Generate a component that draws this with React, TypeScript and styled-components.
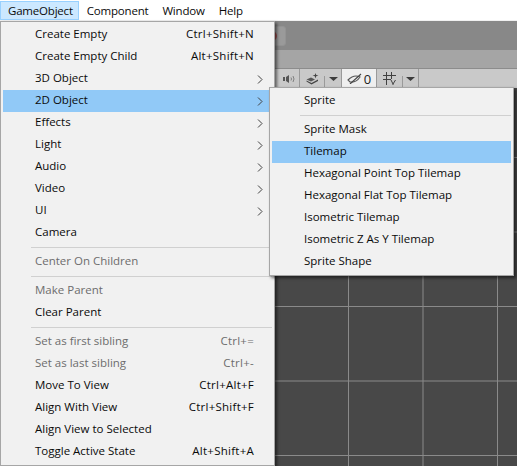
import React from 'react';
import styled, { createGlobalStyle } from 'styled-components';

const GlobalStyle = createGlobalStyle`
  html, body {
    margin: 0;
    padding: 0;
    width: 517px;
    height: 466px;
    overflow: hidden;
    background: #484848;
  }
  * { box-sizing: border-box; }
`;

const Page = styled.div`
  position: relative;
  width: 517px;
  height: 466px;
  display: flex;
  flex-direction: column;
  overflow: hidden;
  font-family: "Open Sans", "Noto Sans", sans-serif;
  font-size: 11.5px;
  color: #0a0a0a;
`;

const MenuBar = styled.div`
  height: 21px;
  flex: none;
  display: flex;
  background: #fff;
  border-bottom: 1px solid #f0f0f0;
  padding: 1px 0 0 0;
`;

const TopItem = styled.div<{ $active?: boolean }>`
  height: 19px;
  padding: 0 5px 0 7px;
  display: flex;
  align-items: center;
  letter-spacing: -0.2px;
  border: 1px solid ${p => (p.$active ? '#99d1ff' : 'transparent')};
  background: ${p => (p.$active ? '#cce8ff' : 'transparent')};
`;

const TitleStrip = styled.div`
  height: 29px;
  flex: none;
  background: #888888;
  display: flex;
  justify-content: flex-end;
  padding: 5px 231px 0 0;
`;

const PlayButton = styled.div`
  width: 20px;
  height: 20px;
  border-radius: 3px;
  background: #9a9a9a;
  border: 1px solid #939393;
  display: flex;
  align-items: center;
`;

const SubStrip = styled.div`
  height: 19px;
  flex: none;
  background: #a5a5a5;
  border-bottom: 1px solid #8c8c8c;
`;

const ToolStrip = styled.div`
  height: 19px;
  flex: none;
  background: #c9c9c9;
  display: flex;
  padding-left: 280px;
  align-items: stretch;
`;

const Tool = styled.div<{ $w: number; $on?: boolean; $open?: boolean }>`
  width: ${p => p.$w}px;
  display: flex;
  align-items: center;
  justify-content: center;
  gap: 2px;
  background: ${p => (p.$on ? '#efefef' : 'transparent')};
  border-right: ${p => (p.$open ? 'none' : '1px solid #9a9a9a')};
  font-size: 13px;
  color: #222;
`;

const ToolNotch = styled.div`
  width: 1px;
  height: 12px;
  align-self: flex-end;
  background: #9a9a9a;
`;

const Scene = styled.div`
  flex: 1;
  background-color: #484848;
  background-image:
    linear-gradient(to right, #8a8a8a 1px, transparent 1px),
    linear-gradient(to bottom, #8a8a8a 1px, transparent 1px);
  background-size: 74.5px 74.5px;
  background-position: 50px 69px;
`;

const Menu = styled.div`
  position: absolute;
  background: #f1f1f1;
  border: 1px solid #a6a6a6;
  padding: 2px;
  box-shadow: 2px 2px 3px rgba(0, 0, 0, 0.55);
`;

const MainMenu = styled(Menu)`
  left: 0;
  top: 21px;
  width: 275px;
`;

const SubMenu = styled(Menu)`
  left: 269px;
  top: 87px;
  width: 245px;
`;

const Row = styled.div<{ $active?: boolean; $off?: boolean; $pad: number }>`
  height: 22px;
  display: flex;
  align-items: center;
  padding: 0 ${p => p.$pad}px 4px 32px;
  background: ${p => (p.$active ? '#91c9f7' : 'transparent')};
  color: ${p => (p.$off ? '#6d6d6d' : '#0a0a0a')};
`;

const Label = styled.span`
  flex: 1;
  white-space: nowrap;
`;

const Shortcut = styled.span`
  white-space: nowrap;
  letter-spacing: 0.25px;
`;

const Separator = styled.div`
  height: 1px;
  margin: 3px 0 3px 28px;
  background: #d0d0d0;
`;

const Arrow = styled.svg`
  width: 6px;
  height: 9px;
  margin: 4px -9px 0 0;
  flex: none;
`;

const Chevron = () => (
  <Arrow viewBox="0 0 6 9">
    <path d="M1 0.5 L5 4.5 L1 8.5" fill="none" stroke="#404040" strokeWidth="1" />
  </Arrow>
);

const Caret = () => (
  <svg width="9" height="4" viewBox="0 0 9 4">
    <path d="M0 0 H9 L4.5 4 Z" fill="#3c3c3c" />
  </svg>
);

const RecordDot = () => (
  <svg width="12" height="12" viewBox="0 0 12 12">
    <circle cx="5" cy="6" r="5" fill="#a05050" />
  </svg>
);

const Speaker = () => (
  <svg width="13" height="8" viewBox="0 0 13 8">
    <path d="M0 2 H2 V6 H0 Z M3 2 L6 0 V8 L3 6 Z" fill="#555" />
    <path d="M8 2.5 Q9 4 8 5.5 M10 1 Q12 4 10 7" fill="none" stroke="#808080" />
  </svg>
);

const Layers = () => (
  <svg width="13" height="12" viewBox="0 0 13 12">
    <path d="M0.5 6.5 L5 4.5 L9 6.5 L5 8.5 Z" fill="#555" />
    <path d="M0.5 8.5 L5.5 11.5 L12 8 V6.5 L5.5 10 L0.5 7.5 Z" fill="#444" />
    <path d="M9.5 0 L10.2 2 L12.5 2.6 L10.2 3.2 L9.5 5.5 L8.8 3.2 L6.5 2.6 L8.8 2 Z" fill="#444" />
  </svg>
);

const Eye = () => (
  <svg width="15" height="11" viewBox="0 0 15 11">
    <path d="M1 7 Q7 1 13 4 Q9 10 3 9 Z" fill="none" stroke="#555" strokeWidth="1.1" />
    <path d="M3 11 L14 1" stroke="#444" strokeWidth="1.1" />
  </svg>
);

const GridIcon = () => (
  <svg width="13" height="13" viewBox="0 0 13 13">
    <path d="M3.5 0 V13 M8.5 0 V7 M0 3.5 H13 M0 7.5 H8 M8 8 L10 12 M12.5 8 L10 12 V13" fill="none" stroke="#404040" />
  </svg>
);

type Item = { label?: string; keys?: string; sub?: boolean; active?: boolean; off?: boolean };

const mainItems: Item[] = [
  { label: 'Create Empty', keys: 'Ctrl+Shift+N' },
  { label: 'Create Empty Child', keys: 'Alt+Shift+N' },
  { label: '3D Object', sub: true },
  { label: '2D Object', sub: true, active: true },
  { label: 'Effects', sub: true },
  { label: 'Light', sub: true },
  { label: 'Audio', sub: true },
  { label: 'Video', sub: true },
  { label: 'UI', sub: true },
  { label: 'Camera' },
  {},
  { label: 'Center On Children', off: true },
  {},
  { label: 'Make Parent', off: true },
  { label: 'Clear Parent' },
  {},
  { label: 'Set as first sibling', keys: 'Ctrl+=', off: true },
  { label: 'Set as last sibling', keys: 'Ctrl+-', off: true },
  { label: 'Move To View', keys: 'Ctrl+Alt+F' },
  { label: 'Align With View', keys: 'Ctrl+Shift+F' },
  { label: 'Align View to Selected' },
  { label: 'Toggle Active State', keys: 'Alt+Shift+A' },
];

const subItems: Item[] = [
  { label: 'Sprite' },
  {},
  { label: 'Sprite Mask' },
  { label: 'Tilemap', active: true },
  { label: 'Hexagonal Point Top Tilemap' },
  { label: 'Hexagonal Flat Top Tilemap' },
  { label: 'Isometric Tilemap' },
  { label: 'Isometric Z As Y Tilemap' },
  { label: 'Sprite Shape' },
];

function renderItems(items: Item[], pad: number) {
  return items.map((item, i) =>
    item.label ? (
      <Row key={i} $active={item.active} $off={item.off} $pad={pad}>
        <Label>{item.label}</Label>
        {item.keys && <Shortcut>{item.keys}</Shortcut>}
        {item.sub && <Chevron />}
      </Row>
    ) : (
      <Separator key={i} />
    )
  );
}

function App() {
  return (
    <Page>
      <GlobalStyle />
      <MenuBar>
        <TopItem $active>GameObject</TopItem>
        <TopItem>Component</TopItem>
        <TopItem>Window</TopItem>
        <TopItem>Help</TopItem>
      </MenuBar>
      <TitleStrip>
        <PlayButton><RecordDot /></PlayButton>
      </TitleStrip>
      <SubStrip />
      <ToolStrip>
        <Tool $w={20}><Speaker /></Tool>
        <Tool $w={24} $open><Layers /></Tool>
        <ToolNotch />
        <Tool $w={17}><Caret /></Tool>
        <Tool $w={35} $on><Eye />0</Tool>
        <Tool $w={25} $open><GridIcon /></Tool>
        <ToolNotch />
        <Tool $w={16}><Caret /></Tool>
      </ToolStrip>
      <Scene />
      <MainMenu>{renderItems(mainItems, 18)}</MainMenu>
      <SubMenu>{renderItems(subItems, 8)}</SubMenu>
    </Page>
  );
}

export default App;
